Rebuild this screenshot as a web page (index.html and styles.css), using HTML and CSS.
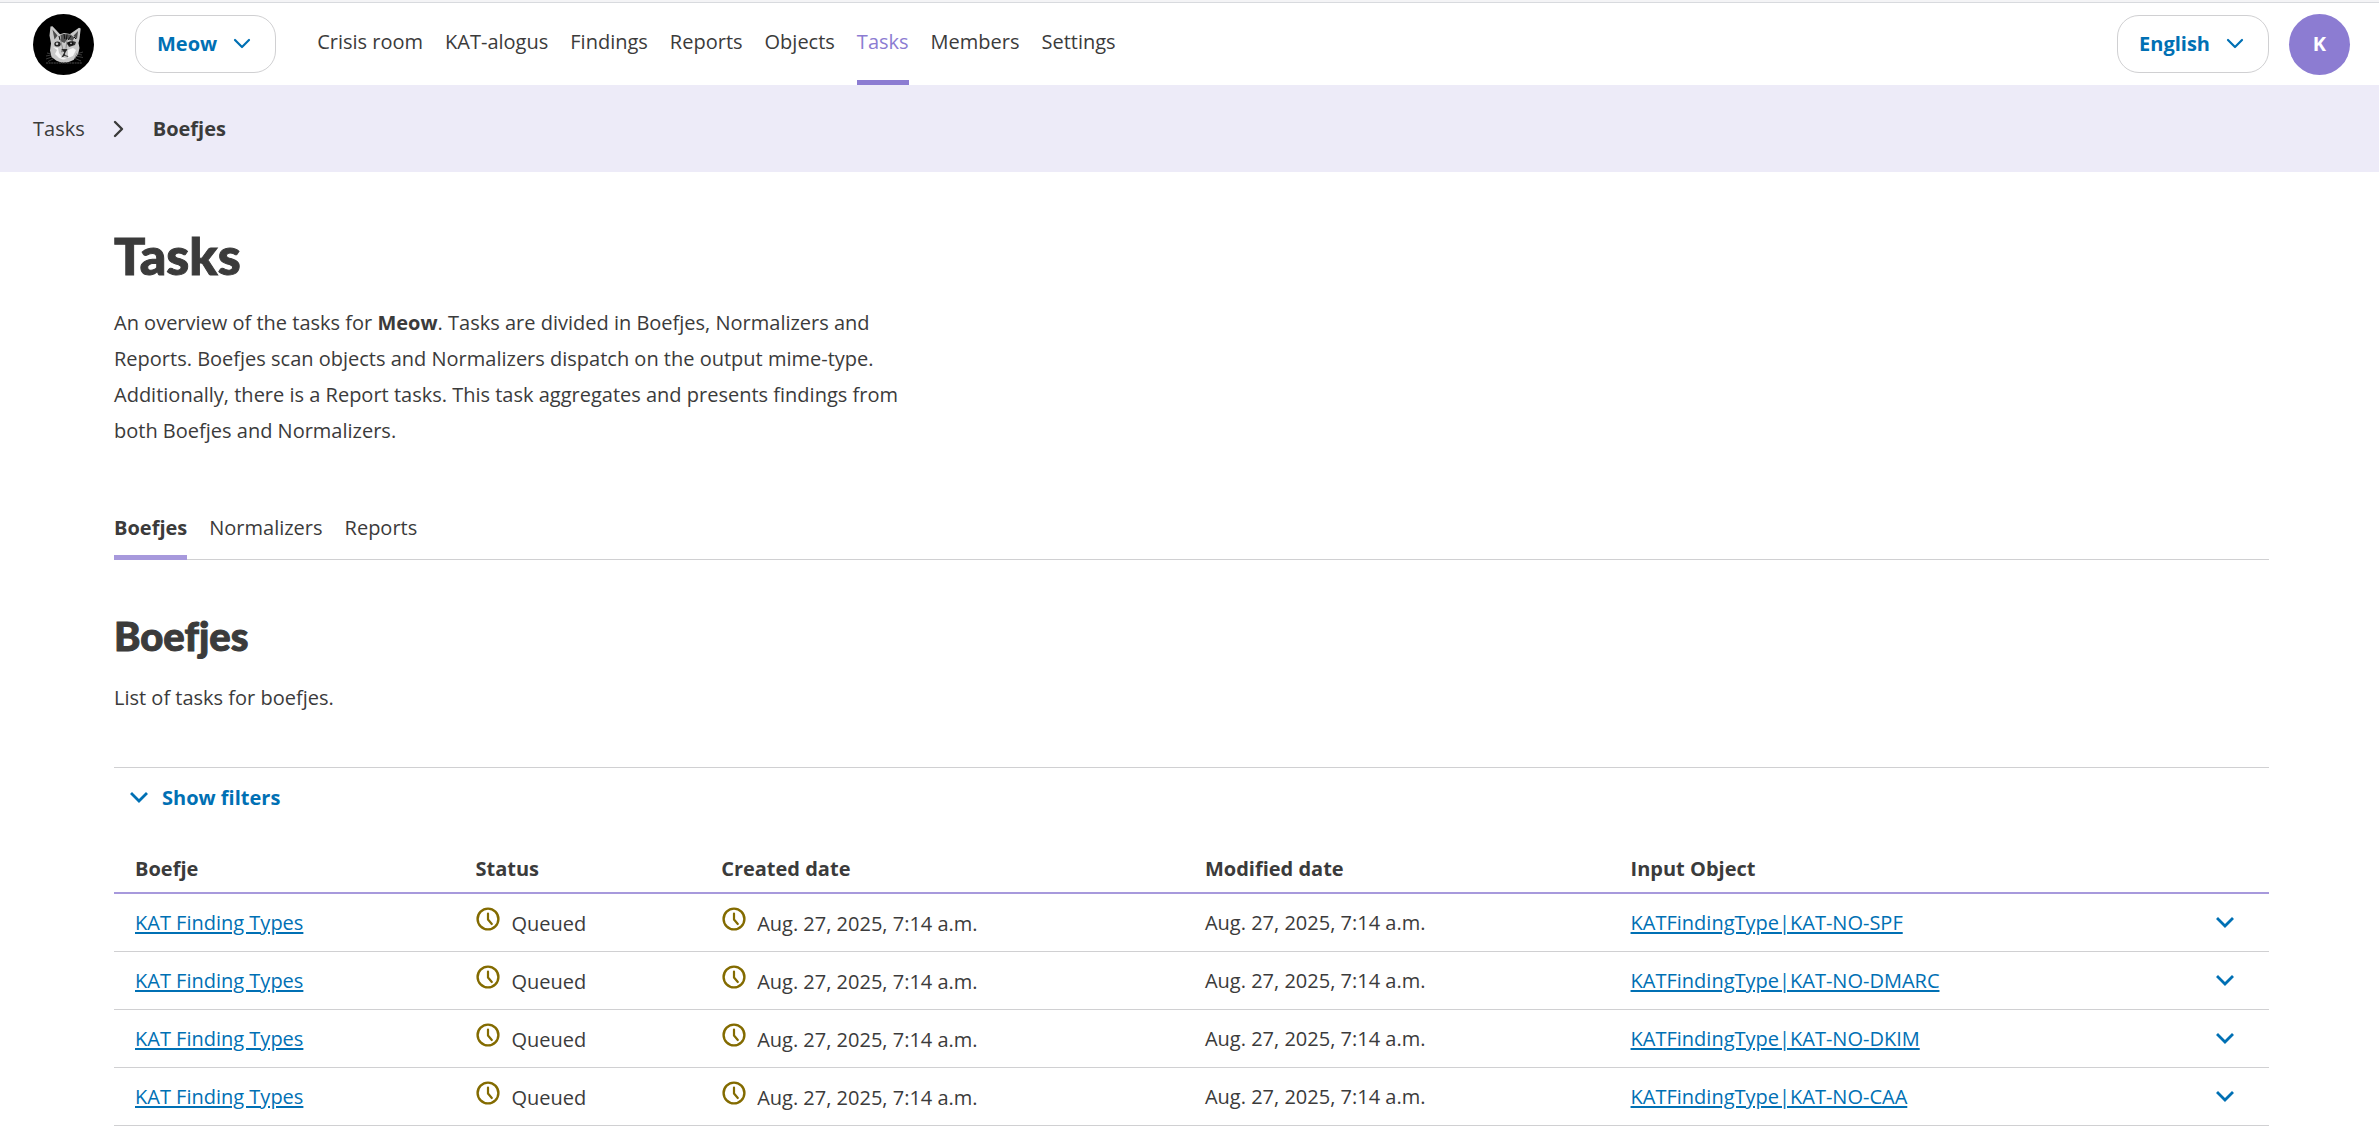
FILE: index.html
```html
<!DOCTYPE html>
<html lang="en">
<head>
<meta charset="utf-8">
<title>Tasks - Boefjes</title>
<meta name="viewport" content="width=device-width, initial-scale=1">
<link rel="stylesheet" href="styles.css">
</head>
<body>
<svg class="sprite" aria-hidden="true">
  <symbol id="chevron" viewBox="0 0 18 12"><path d="M2 2l7 7 7-7" fill="none" stroke="currentColor" stroke-width="2.2" stroke-linecap="round" stroke-linejoin="round"/></symbol>
  <symbol id="chevron-bold" viewBox="0 0 18 12"><path d="M2 2l7 7 7-7" fill="none" stroke="currentColor" stroke-width="2.8" stroke-linecap="square"/></symbol>
  <symbol id="clock" viewBox="0 0 24 26"><circle cx="12" cy="13" r="10.4" fill="none" stroke="currentColor" stroke-width="2.4"/><path d="M12 7.5v6l3.8 4.5" fill="none" stroke="currentColor" stroke-width="2.2" stroke-linecap="round" stroke-linejoin="round"/></symbol>
</svg>
<header class="header">
  <a class="logo" href="#" aria-label="Home">
    <svg viewBox="0 0 61 61" width="61" height="61" aria-hidden="true">
      <circle cx="30.5" cy="30.5" r="30.5" fill="#000"/>
      <path d="M17.500 12.500l2-.2 7.500 8 4-1.200 6 .8 9-6.200 1.700.8-1.200 10.500-1 4 1 5-1.500 6.500-4.500 5.500-6 2.500-5 .5-6-2.200-5-3.800-1.500-6.500 1-7-1.500-8z" fill="#c9c9c9"/>
      <path d="M19.500 15.500l5 6-3 4zM45 17l-1 8-3.500-3.200z" fill="#4b4b4b"/>
      <path d="M27.500 21l3-1 7 .5 4 3-2 3.500-5-2-3 4-3.500-1.500z" fill="#555"/>
      <path d="M31 20l.8 5M34 20.500l-.6 5M38 22l-3 4M26 22l1 4M41 23l2 2" stroke="#111" stroke-width="1"/>
      <path d="M33.500 28.500l6-1.500 3.500 1-1 3-6 2z" fill="#333"/>
      <path d="M20 33l4 3-2 4 4 4 4 1.500 4-.5-5-2-3-4-1-5zM35 36l5-2 3 2-3 6-5 2z" fill="#f5f5f5"/>
      <ellipse cx="24.500" cy="30" rx="3.200" ry="2.600" fill="#222"/><circle cx="24" cy="29.700" r="1.300" fill="#ccc"/>
      <ellipse cx="37.500" cy="29.500" rx="3" ry="2.100" fill="#111"/><circle cx="38" cy="29.300" r=".9" fill="#bbb"/>
      <path d="M27.500 26l2 8-1 4 2.500-1M34 26l-1 8" stroke="#888" stroke-width="1" fill="none"/>
      <path d="M29 35.500l5-.2-2 3.200zM31.500 38l.2 3.500-3 1.500M31.700 41.500l3.500 1" fill="#222" stroke="#222" stroke-width=".9"/>
      <path d="M18 41l-5 1M19 43l-6 2M20 45l-5 2.500M43 40l6 1M42 42l8 1.500M41 44l7 3M14 39l4 1M50 38l-5 1.500" stroke="#555" stroke-width=".7"/>
      <path d="M13 49h36" stroke="#333" stroke-width="1.600" stroke-dasharray="2 .6"/>
    </svg>
  </a>
  <button class="dropdown" type="button">Meow <svg class="chevron"><use href="#chevron"/></svg></button>
  <nav class="main-nav" aria-label="Main">
    <a href="#">Crisis room</a>
    <a href="#">KAT-alogus</a>
    <a href="#">Findings</a>
    <a href="#">Reports</a>
    <a href="#">Objects</a>
    <a href="#" class="active" aria-current="page">Tasks</a>
    <a href="#">Members</a>
    <a href="#">Settings</a>
  </nav>
  <button class="dropdown language" type="button">English <svg class="chevron"><use href="#chevron"/></svg></button>
  <button class="avatar" type="button" aria-label="Account K">K</button>
</header>
<nav class="breadcrumbs" aria-label="Breadcrumbs">
  <a href="#">Tasks</a>
  <svg class="separator" viewBox="0 0 12 18" aria-hidden="true"><path d="M2 2l7 7-7 7" fill="none" stroke="currentColor" stroke-width="2.4" stroke-linecap="round" stroke-linejoin="round"/></svg>
  <a href="#" class="current" aria-current="page">Boefjes</a>
</nav>
<main class="content">
  <h1>Tasks</h1>
  <p class="intro">An overview of the tasks for <strong>Meow</strong>. Tasks are divided in Boefjes, Normalizers and Reports. Boefjes scan objects and Normalizers dispatch on the output mime-type. Additionally, there is a Report tasks. This task aggregates and presents findings from both Boefjes and Normalizers.</p>
  <nav class="tabs" aria-label="Task types">
    <a href="#" class="active" aria-current="page">Boefjes</a>
    <a href="#">Normalizers</a>
    <a href="#">Reports</a>
  </nav>
  <h2>Boefjes</h2>
  <p>List of tasks for boefjes.</p>
  <div class="filters">
    <button type="button" aria-expanded="false"><svg class="chevron"><use href="#chevron-bold"/></svg>Show filters</button>
  </div>
  <table class="tasks">
    <colgroup><col class="col-boefje"><col class="col-status"><col class="col-created"><col class="col-modified"><col><col class="col-toggle"></colgroup>
    <thead>
      <tr><th scope="col">Boefje</th><th scope="col">Status</th><th scope="col">Created date</th><th scope="col">Modified date</th><th scope="col">Input Object</th><td></td></tr>
    </thead>
    <tbody>
      <tr>
        <td><a href="#">KAT Finding Types</a></td>
        <td><span class="state"><svg class="clock"><use href="#clock"/></svg>Queued</span></td>
        <td><span class="state"><svg class="clock"><use href="#clock"/></svg>Aug. 27, 2025, 7:14 a.m.</span></td>
        <td>Aug. 27, 2025, 7:14 a.m.</td>
        <td><a href="#">KATFindingType|KAT-NO-SPF</a></td>
        <td><button class="toggle" type="button" aria-label="Show details"><svg class="chevron"><use href="#chevron-bold"/></svg></button></td>
      </tr>
      <tr>
        <td><a href="#">KAT Finding Types</a></td>
        <td><span class="state"><svg class="clock"><use href="#clock"/></svg>Queued</span></td>
        <td><span class="state"><svg class="clock"><use href="#clock"/></svg>Aug. 27, 2025, 7:14 a.m.</span></td>
        <td>Aug. 27, 2025, 7:14 a.m.</td>
        <td><a href="#">KATFindingType|KAT-NO-DMARC</a></td>
        <td><button class="toggle" type="button" aria-label="Show details"><svg class="chevron"><use href="#chevron-bold"/></svg></button></td>
      </tr>
      <tr>
        <td><a href="#">KAT Finding Types</a></td>
        <td><span class="state"><svg class="clock"><use href="#clock"/></svg>Queued</span></td>
        <td><span class="state"><svg class="clock"><use href="#clock"/></svg>Aug. 27, 2025, 7:14 a.m.</span></td>
        <td>Aug. 27, 2025, 7:14 a.m.</td>
        <td><a href="#">KATFindingType|KAT-NO-DKIM</a></td>
        <td><button class="toggle" type="button" aria-label="Show details"><svg class="chevron"><use href="#chevron-bold"/></svg></button></td>
      </tr>
      <tr>
        <td><a href="#">KAT Finding Types</a></td>
        <td><span class="state"><svg class="clock"><use href="#clock"/></svg>Queued</span></td>
        <td><span class="state"><svg class="clock"><use href="#clock"/></svg>Aug. 27, 2025, 7:14 a.m.</span></td>
        <td>Aug. 27, 2025, 7:14 a.m.</td>
        <td><a href="#">KATFindingType|KAT-NO-CAA</a></td>
        <td><button class="toggle" type="button" aria-label="Show details"><svg class="chevron"><use href="#chevron-bold"/></svg></button></td>
      </tr>
    </tbody>
  </table>
</main>
</body>
</html>
```
FILE: styles.css
```css
:root {
  --text: #3b3b3b;
  --link: #0070b4;
  --accent: #8c7cd2;
  --accent-mid: #a799dc;
  --accent-light: #edebf8;
  --line: #d0d0d2;
  --queued: #836b00;
}

* { box-sizing: border-box; }

body {
  margin: 0;
  border-top: 2px solid #f4f4f6;
  background: #fff;
  color: var(--text);
  font-family: "Open Sans", "Noto Sans", sans-serif;
  font-size: 20px;
  line-height: 36px;
}

button {
  padding: 0;
  border: 0;
  background: none;
  color: var(--link);
  font: inherit;
  font-weight: 700;
  cursor: pointer;
}

a { color: inherit; text-decoration: none; }
p, h1, h2 { margin: 0; }

.sprite { position: absolute; width: 0; height: 0; }
.chevron { width: 18px; height: 12px; flex: none; }

.header {
  display: flex;
  align-items: center;
  height: 83px;
  padding: 0 29px 0 33px;
  border-top: 1px solid #d8dade;
}

.logo { display: flex; margin-right: 41px; }

.dropdown {
  display: flex;
  align-items: center;
  gap: 16px;
  height: 58px;
  padding: 0 24px 0 21px;
  border: 1px solid var(--line);
  border-radius: 22px;
}

.main-nav {
  display: flex;
  align-self: stretch;
  gap: 22px;
  margin-left: 41px;
}

.main-nav a {
  display: flex;
  align-items: center;
  padding-top: 1px;
  border-bottom: 5px solid transparent;
}

.main-nav .active { border-color: var(--accent); color: var(--accent); }
.language { margin-left: auto; }

.avatar {
  width: 61px;
  height: 61px;
  margin-left: 20px;
  border-radius: 50%;
  background: var(--accent);
  color: #fff;
}

.breadcrumbs {
  display: flex;
  align-items: center;
  gap: 28px;
  height: 87px;
  padding: 0 33px;
  background: var(--accent-light);
}

.separator { width: 12px; height: 18px; }
.current { font-weight: 700; }

.content { padding: 53px 110px 12px 114px; }

h1, h2 {
  font-family: Lato, "Open Sans", sans-serif;
  font-weight: 900;
  font-variant-ligatures: none;
  -webkit-text-stroke: 1px currentColor;
}

h1 { font-size: 52px; line-height: 60px; }
h2 { margin-top: 48px; font-size: 40px; line-height: 56px; }
h1 + p { margin-top: 20px; }
h2 + p { margin-top: 16px; }

.intro { max-width: 820px; }

.tabs {
  display: flex;
  gap: 22px;
  margin-top: 55px;
  border-bottom: 1px solid var(--line);
}

.tabs a { padding: 6px 0 9px; margin-bottom: -1px; border-bottom: 5px solid transparent; }
.tabs .active { border-color: var(--accent-mid); font-weight: 700; }

.filters {
  margin-top: 51px;
  padding: 12px 16px;
  border-top: 1px solid var(--line);
}

.filters button { display: flex; align-items: center; gap: 14px; }

.tasks {
  width: 100%;
  margin-top: 17px;
  border-collapse: separate;
  border-spacing: 0;
  table-layout: fixed;
  text-align: left;
}

.col-boefje { width: 15.8%; }
.col-status { width: 11.4%; }
.col-created { width: 22.45%; }
.col-modified { width: 19.75%; }
.col-toggle { width: 80px; }

.tasks th, .tasks td { height: 58px; padding: 0 21px; border-bottom: 1px solid var(--line); }
.tasks thead th, .tasks thead td { height: 49px; border-bottom: 2px solid var(--accent-mid); }
.tasks a { color: var(--link); text-decoration: underline; text-underline-offset: 2px; }

.state { display: flex; gap: 11px; padding-top: 2px; }
.clock { width: 24px; height: 26px; flex: none; margin-left: 1px; color: var(--queued); }
.toggle { display: flex; padding: 6px; }
```
